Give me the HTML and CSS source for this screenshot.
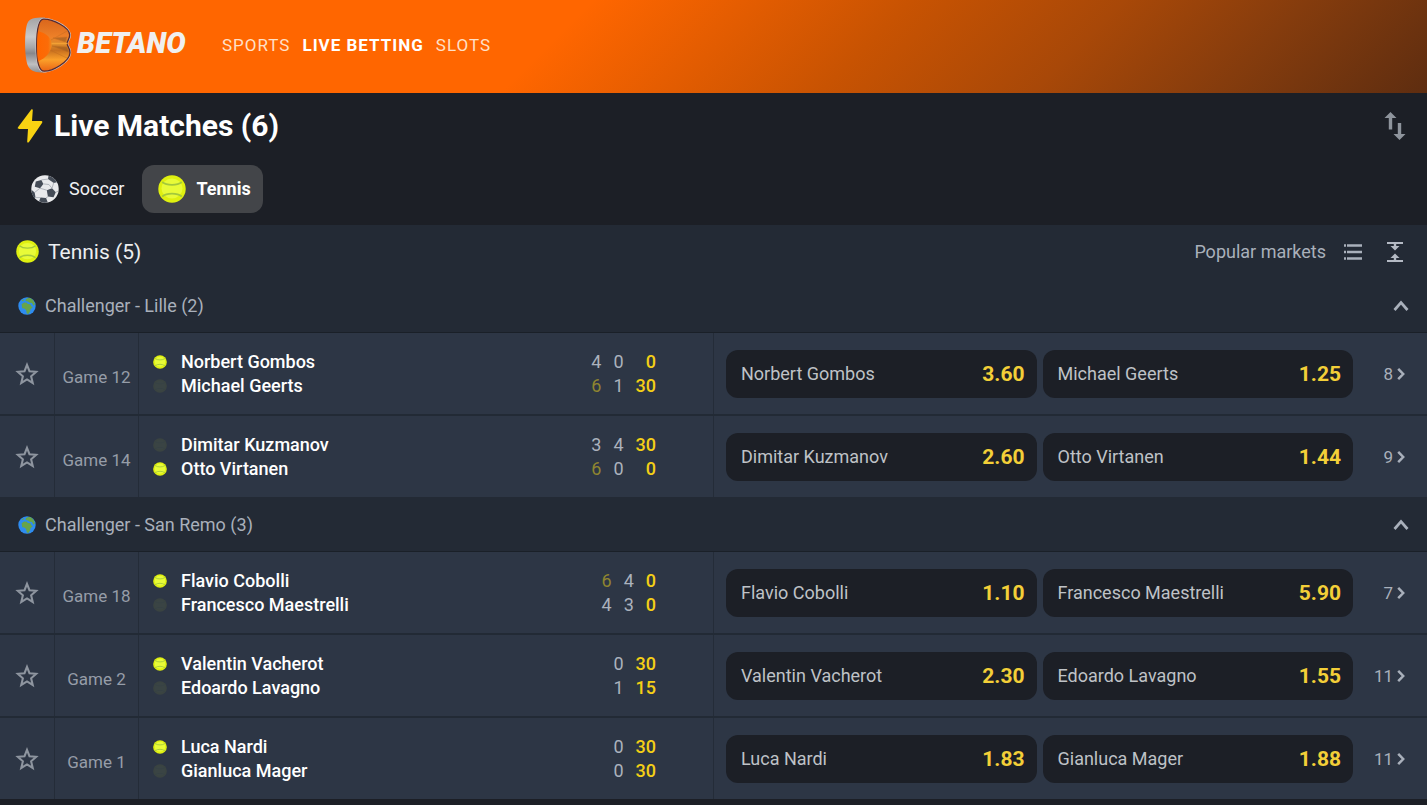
FILE: index.html
```html
<!DOCTYPE html>
<html lang="en">
<head>
<meta charset="utf-8">
<title>Betano – Live Betting</title>
<link rel="stylesheet" href="styles.css">
</head>
<body>
<svg class="defs" aria-hidden="true">
  <defs>
    <linearGradient id="steel" x1="0" y1="0" x2="0" y2="1"><stop offset="0" stop-color="#a3a3a5"/><stop offset=".35" stop-color="#c9c9cb"/><stop offset=".55" stop-color="#a5a5a8"/><stop offset=".65" stop-color="#87878b"/><stop offset=".85" stop-color="#c0c0c2"/><stop offset="1" stop-color="#8e8e91"/></linearGradient>
    <linearGradient id="amber" x1="0" y1="0" x2="0" y2="1"><stop offset="0" stop-color="#d9661c"/><stop offset=".35" stop-color="#ee8128"/><stop offset=".48" stop-color="#d98a2c"/><stop offset=".6" stop-color="#c8701f"/><stop offset=".78" stop-color="#fba02a"/><stop offset="1" stop-color="#ea6414"/></linearGradient>
    <linearGradient id="hollow" x1="0" y1="0" x2="1" y2="0"><stop offset="0" stop-color="#ff6600"/><stop offset=".75" stop-color="#fb6c08"/><stop offset="1" stop-color="#f08a20"/></linearGradient>
  </defs>
  <symbol id="ball" viewBox="0 0 28 28"><circle cx="14" cy="14" r="13.7" fill="#dff010"/><ellipse cx="14" cy="13.5" rx="10.5" ry="10" fill="#e8fb38"/><path d="M4.200 7c4.500 3.800 15.100 3.800 19.600 0M4.200 21.500c4.500-3.800 15.100-3.800 19.600 0" fill="none" stroke="#a3c83c" stroke-width="1.700"/></symbol>
  <symbol id="soccer" viewBox="0 0 28 28"><circle cx="14" cy="14" r="13.700" fill="#e9eaec"/><g fill="#454c57"><path d="M4.800 6.400l5.600-1.500 1.900 4-3.200 4.300-5.300-1.500z"/><path d="M15.800 15.200l5.200-2 3.800 4-2.300 5-5.600-.7z"/><path d="M17.500.8c4 1 6.600 3.200 8.300 6.400l-3 .7-5.800-3.800z"/><path d="M.7 15l3 2.400.8 5.200-1 .5C1.500 21 .4 18 .7 15zM9.500 22.500l5.600.5 1.600 4.300c-3.200.8-6 .2-8.600-1z"/></g><path d="M12.300 8.900l5.600.6 3.200 3.800M9 13.200l6.800 2M9 13.200l-5.300 4.200M17 21.500l-2 1.500M22.700 7.800l-1.700 5.500M10.400 4.900l6.600-.8M4.500 22.600l5 0M24.800 17.200l2.500-1" fill="none" stroke="#a3a8b0" stroke-width=".8"/></symbol>
  <symbol id="globe" viewBox="0 0 18 18"><circle cx="9" cy="9" r="8.700" fill="#2e8cf0"/><path d="M3.600 7.300l2.500-1.700 2.700.2 1 1.200 2.600.2 1 2.400 1.500.5-2.300 2.200-.6 2.500-1.700 2.300-1.500-.5-.7-3.700-1.800-1.300-2.100-.3zM8 2l3-1.300 2.600 1 2.200 2.500 1.200 3-1.500 1.500-1.600-2.700-2.200-.3L10 4.500 7.600 4zM3.700 3.300l2-1 .3 1.200-1.800.8z" fill="#68a44a"/></symbol>
  <symbol id="star" viewBox="0 0 24 24"><path d="M12 3.500l2.300 5.900 6.200.5-4.700 4.200 1.500 6.200-5.300-3.300-5.300 3.300 1.500-6.200-4.700-4.200 6.200-.5z" fill="none" stroke="currentColor" stroke-width="1.900"/></symbol>
  <symbol id="up" viewBox="0 0 16 16"><path d="M1.500 12L8 4.500l6.500 7.500" fill="none" stroke="currentColor" stroke-width="2.700"/></symbol>
  <symbol id="right" viewBox="0 0 8 14"><path d="M1.200 1.800l5 5.200-5 5.200" fill="none" stroke="currentColor" stroke-width="2.500"/></symbol>
</svg>

<header class="top">
  <a class="brand" href="#" aria-label="Betano">
    <svg class="brand-mark" viewBox="0 0 48 56" aria-hidden="true">
      <path d="M21 .6C11 .5 5.500 1.500 3.500 6 .3 13 .2 40 4 49c2.500 5.500 8 6.500 16 6.500z" fill="url(#steel)"/>
      <path d="M19.500 1C29 .5 46.500 9 47 17.500c.2 4.500-2.700 6.500-2.700 9s3.200 4 2.900 9.500C46.500 46 29 55.500 20 55.500c-6 0-8.500-9-8.500-27S14 1.200 19.500 1z" fill="#c9c4c6"/>
      <path d="M19.500 2.200C28.500 2 45.300 10 45.700 17.800c.2 4-2.600 6-2.600 8.700s3.100 4.500 2.900 9.300C45.500 45 28.500 54.200 20.200 54.200c-5 0-7.500-8.700-7.500-25.700S14.700 2.300 19.500 2.200z" fill="url(#amber)" stroke="#552a30" stroke-width="1.300"/>
      <path d="M27 23l17-9.500M29 21l14-1-1.500 5zM28 29l15 1 1.500 5zM26 33l17 8" fill="#9a5a20" stroke="#b8661f" stroke-width=".6" opacity=".6"/>
      <path d="M14 14c8 2 14 7 13.700 13.500C27.500 35 22 41 14 44.500c-1.200-9-1.200-21 0-30.500z" fill="url(#hollow)"/>
      <path d="M27.500 26.500h16" stroke="#f3a034" stroke-width="1.500"/>
    </svg>
    <span class="wordmark">BETANO</span>
  </a>
  <nav class="nav">
    <a href="#">SPORTS</a>
    <a class="active" href="#" aria-current="page">LIVE BETTING</a>
    <a href="#">SLOTS</a>
  </nav>
</header>

<main>
  <section class="intro">
    <div class="title-row">
      <svg class="bolt" viewBox="0 0 26 34" aria-hidden="true"><path d="M14.500.3c.7-.4 1.400 0 1.300.8L15 12h9c1.300 0 1.700.9 1 1.900L12 33c-.8 1-1.900.7-1.800-.5L11 20H2C.7 20 .4 19.200 1 18.200z" fill="#f8d312"/></svg>
      <h1>Live Matches (6)</h1>
      <button class="icon-btn" aria-label="Sort"><svg width="22" height="28" viewBox="0 0 22 28" aria-hidden="true"><path d="M6.500 0l6 6H8.200v11.500H4.800V6H.5zM15.500 28l-6-6h4.300V11h3.400v11h4.300z" fill="currentColor"/></svg></button>
    </div>
    <div class="tabs">
      <button class="tab"><svg class="sport" aria-hidden="true"><use href="#soccer"/></svg>Soccer</button>
      <button class="tab selected" aria-pressed="true"><svg class="sport" aria-hidden="true"><use href="#ball"/></svg>Tennis</button>
    </div>
  </section>

  <section class="board">
    <div class="sport-head">
      <svg class="sport-icon" aria-hidden="true"><use href="#ball"/></svg>
      <h2>Tennis (5)</h2>
      <button class="markets">Popular markets<svg width="18" height="16" viewBox="0 0 18 16" aria-hidden="true"><path d="M3 1.500h15M3 8h15M3 14.500h15M0 1.500h2M0 8h2M0 14.500h2" stroke="currentColor" stroke-width="2.400"/></svg></button>
      <button class="icon-btn light" aria-label="Collapse all"><svg width="16" height="20" viewBox="0 0 16 20" aria-hidden="true"><path d="M0 0h16v2H9.200v2H12.500L8 8.500 3.500 4h3.300V2H0zM0 20h16v-2H9.200v-2h3.300L8 11.500 3.500 16h3.300v2H0z" fill="currentColor"/></svg></button>
    </div>

    <button class="league" aria-expanded="true"><svg class="globe" aria-hidden="true"><use href="#globe"/></svg><span>Challenger - Lille (2)</span><svg class="chev-up" aria-hidden="true"><use href="#up"/></svg></button>
    <div class="matches">
      <article class="match">
        <button class="fav" aria-label="Add to favourites"><svg aria-hidden="true"><use href="#star"/></svg></button>
        <div class="game">Game 12</div>
        <div class="info">
          <div class="players">
            <div class="player"><svg class="serve" aria-hidden="true"><use href="#ball"/></svg>Norbert Gombos</div>
            <div class="player"><svg class="serve off" aria-hidden="true"><use href="#ball"/></svg>Michael Geerts</div>
          </div>
          <div class="score sets-3"><span>4</span><span>0</span><b>0</b><span class="won">6</span><span>1</span><b>30</b></div>
        </div>
        <div class="odds">
          <button class="odd"><span>Norbert Gombos</span><b>3.60</b></button>
          <button class="odd"><span>Michael Geerts</span><b>1.25</b></button>
          <a class="more" href="#">8<svg aria-hidden="true"><use href="#right"/></svg></a>
        </div>
      </article>
      <article class="match">
        <button class="fav" aria-label="Add to favourites"><svg aria-hidden="true"><use href="#star"/></svg></button>
        <div class="game">Game 14</div>
        <div class="info">
          <div class="players">
            <div class="player"><svg class="serve off" aria-hidden="true"><use href="#ball"/></svg>Dimitar Kuzmanov</div>
            <div class="player"><svg class="serve" aria-hidden="true"><use href="#ball"/></svg>Otto Virtanen</div>
          </div>
          <div class="score sets-3"><span>3</span><span>4</span><b>30</b><span class="won">6</span><span>0</span><b>0</b></div>
        </div>
        <div class="odds">
          <button class="odd"><span>Dimitar Kuzmanov</span><b>2.60</b></button>
          <button class="odd"><span>Otto Virtanen</span><b>1.44</b></button>
          <a class="more" href="#">9<svg aria-hidden="true"><use href="#right"/></svg></a>
        </div>
      </article>
    </div>

    <button class="league" aria-expanded="true"><svg class="globe" aria-hidden="true"><use href="#globe"/></svg><span>Challenger - San Remo (3)</span><svg class="chev-up" aria-hidden="true"><use href="#up"/></svg></button>
    <div class="matches">
      <article class="match">
        <button class="fav" aria-label="Add to favourites"><svg aria-hidden="true"><use href="#star"/></svg></button>
        <div class="game">Game 18</div>
        <div class="info">
          <div class="players">
            <div class="player"><svg class="serve" aria-hidden="true"><use href="#ball"/></svg>Flavio Cobolli</div>
            <div class="player"><svg class="serve off" aria-hidden="true"><use href="#ball"/></svg>Francesco Maestrelli</div>
          </div>
          <div class="score sets-3"><span class="won">6</span><span>4</span><b>0</b><span>4</span><span>3</span><b>0</b></div>
        </div>
        <div class="odds">
          <button class="odd"><span>Flavio Cobolli</span><b>1.10</b></button>
          <button class="odd"><span>Francesco Maestrelli</span><b>5.90</b></button>
          <a class="more" href="#">7<svg aria-hidden="true"><use href="#right"/></svg></a>
        </div>
      </article>
      <article class="match">
        <button class="fav" aria-label="Add to favourites"><svg aria-hidden="true"><use href="#star"/></svg></button>
        <div class="game">Game 2</div>
        <div class="info">
          <div class="players">
            <div class="player"><svg class="serve" aria-hidden="true"><use href="#ball"/></svg>Valentin Vacherot</div>
            <div class="player"><svg class="serve off" aria-hidden="true"><use href="#ball"/></svg>Edoardo Lavagno</div>
          </div>
          <div class="score"><span>0</span><b>30</b><span>1</span><b>15</b></div>
        </div>
        <div class="odds">
          <button class="odd"><span>Valentin Vacherot</span><b>2.30</b></button>
          <button class="odd"><span>Edoardo Lavagno</span><b>1.55</b></button>
          <a class="more" href="#">11<svg aria-hidden="true"><use href="#right"/></svg></a>
        </div>
      </article>
      <article class="match">
        <button class="fav" aria-label="Add to favourites"><svg aria-hidden="true"><use href="#star"/></svg></button>
        <div class="game">Game 1</div>
        <div class="info">
          <div class="players">
            <div class="player"><svg class="serve" aria-hidden="true"><use href="#ball"/></svg>Luca Nardi</div>
            <div class="player"><svg class="serve off" aria-hidden="true"><use href="#ball"/></svg>Gianluca Mager</div>
          </div>
          <div class="score"><span>0</span><b>30</b><span>0</span><b>30</b></div>
        </div>
        <div class="odds">
          <button class="odd"><span>Luca Nardi</span><b>1.83</b></button>
          <button class="odd"><span>Gianluca Mager</span><b>1.88</b></button>
          <a class="more" href="#">11<svg aria-hidden="true"><use href="#right"/></svg></a>
        </div>
      </article>
    </div>
  </section>
</main>
</body>
</html>
```
FILE: styles.css
```css
* { box-sizing: border-box; }
body { margin: 0; background: #1c1f26; color: #fff; font: 18px/24px Roboto, sans-serif; }
button { padding: 0; border: 0; background: none; color: inherit; font: inherit; cursor: pointer; }
a { color: inherit; text-decoration: none; }
h1, h2 { margin: 0; }
svg { display: block; flex: none; }
.defs { position: absolute; width: 0; height: 0; }

.top { display: flex; align-items: center; height: 93px; padding: 0 24px 3px; background: linear-gradient(135deg, #f60 0%, #f60 39%, #c85302 60%, #a84808 74%, #853c0d 86%, #5e2d10 100%); }
.brand { display: flex; align-items: center; width: 198px; gap: 5px; }
.brand-mark { width: 48px; height: 56px; }
.wordmark { font: italic 900 29px/36px Roboto, sans-serif; color: #f0f0f0; padding-bottom: 4px; }
.nav { display: flex; gap: 12px; color: #ffe0c8; font-size: 17px; letter-spacing: 1px; }
.nav .active { color: #fff; font-weight: 700; }

.intro { height: 132px; padding: 12px 16px; }
.title-row { display: flex; align-items: center; height: 42px; gap: 10px; }
.bolt { width: 28px; height: 34px; }
h1 { flex: 1; font-size: 30px; line-height: 40px; font-weight: 700; }
.icon-btn { color: #8e949c; padding: 0 5px; }
.icon-btn.light { color: #b4bac4; padding: 0 8px; }
.tabs { display: flex; margin-top: 18px; gap: 6px; }
.tab { display: flex; align-items: center; height: 48px; gap: 10px; padding: 0 12px 0 15px; border-radius: 12px; color: #f0f1f3; }
.tab.selected { padding: 0 12px 0 16px; background: #434549; color: #fff; font-weight: 700; }
.sport { width: 28px; height: 28px; }

.board { background: #232a35; }
.sport-head { display: flex; align-items: center; height: 53px; padding: 0 16px; color: #eceef0; }
.sport-icon { width: 23px; height: 23px; }
h2 { flex: 1; margin-left: 9px; font-size: 21px; line-height: 28px; font-weight: 400; }
.markets { display: flex; align-items: center; gap: 18px; margin-right: 17px; color: #a9b0bb; }

.league { display: flex; align-items: center; width: 100%; height: 55px; padding: 2px 18px 0; gap: 9px; text-align: left; color: #a9b0bb; border-bottom: 1px solid #1a2028; }
.league span { flex: 1; }
.globe { width: 18px; height: 18px; }
.chev-up { width: 16px; height: 16px; }

.matches { display: grid; gap: 2px; background: #222a35; }
.match { display: grid; grid-template-columns: 55px 84px minmax(0, 575fr) minmax(0, 713fr); height: 81px; background: #2d3645; }
.fav, .game, .info { border-right: 1px solid #242c38; }
.fav { display: grid; place-items: center; color: #8e959f; }
.fav svg { width: 26px; height: 26px; }
.game { display: grid; place-items: center; padding-top: 6px; font-size: 17px; color: #969da8; }
.info { display: flex; align-items: center; justify-content: space-between; padding: 0 57px 0 14px; }
.player { display: flex; align-items: center; gap: 14px; font-weight: 500; }
.serve { width: 14px; height: 14px; }
.serve.off { opacity: .07; }
.score { display: grid; grid-template-columns: repeat(2, auto); column-gap: 12px; text-align: right; color: #abb2bd; }
.score.sets-3 { grid-template-columns: repeat(3, auto); }
.score b { color: #f4cf16; font-weight: 500; }
.score .won { color: #8f8530; }
.odds { display: grid; grid-template-columns: 1fr 1fr 46px; align-items: center; gap: 6px; padding: 0 22px 0 12px; }
.odd { display: flex; align-items: center; justify-content: space-between; height: 48px; padding: 0 12px 0 15px; border-radius: 12px; background: #1c1f26; color: #bfc2c6; }
.odd b { font-size: 21px; color: #f3cf38; }
.more { display: flex; align-items: center; justify-content: flex-end; gap: 4px; font-size: 17px; color: #a9b0bb; }
.more svg { width: 8px; height: 14px; }
```
